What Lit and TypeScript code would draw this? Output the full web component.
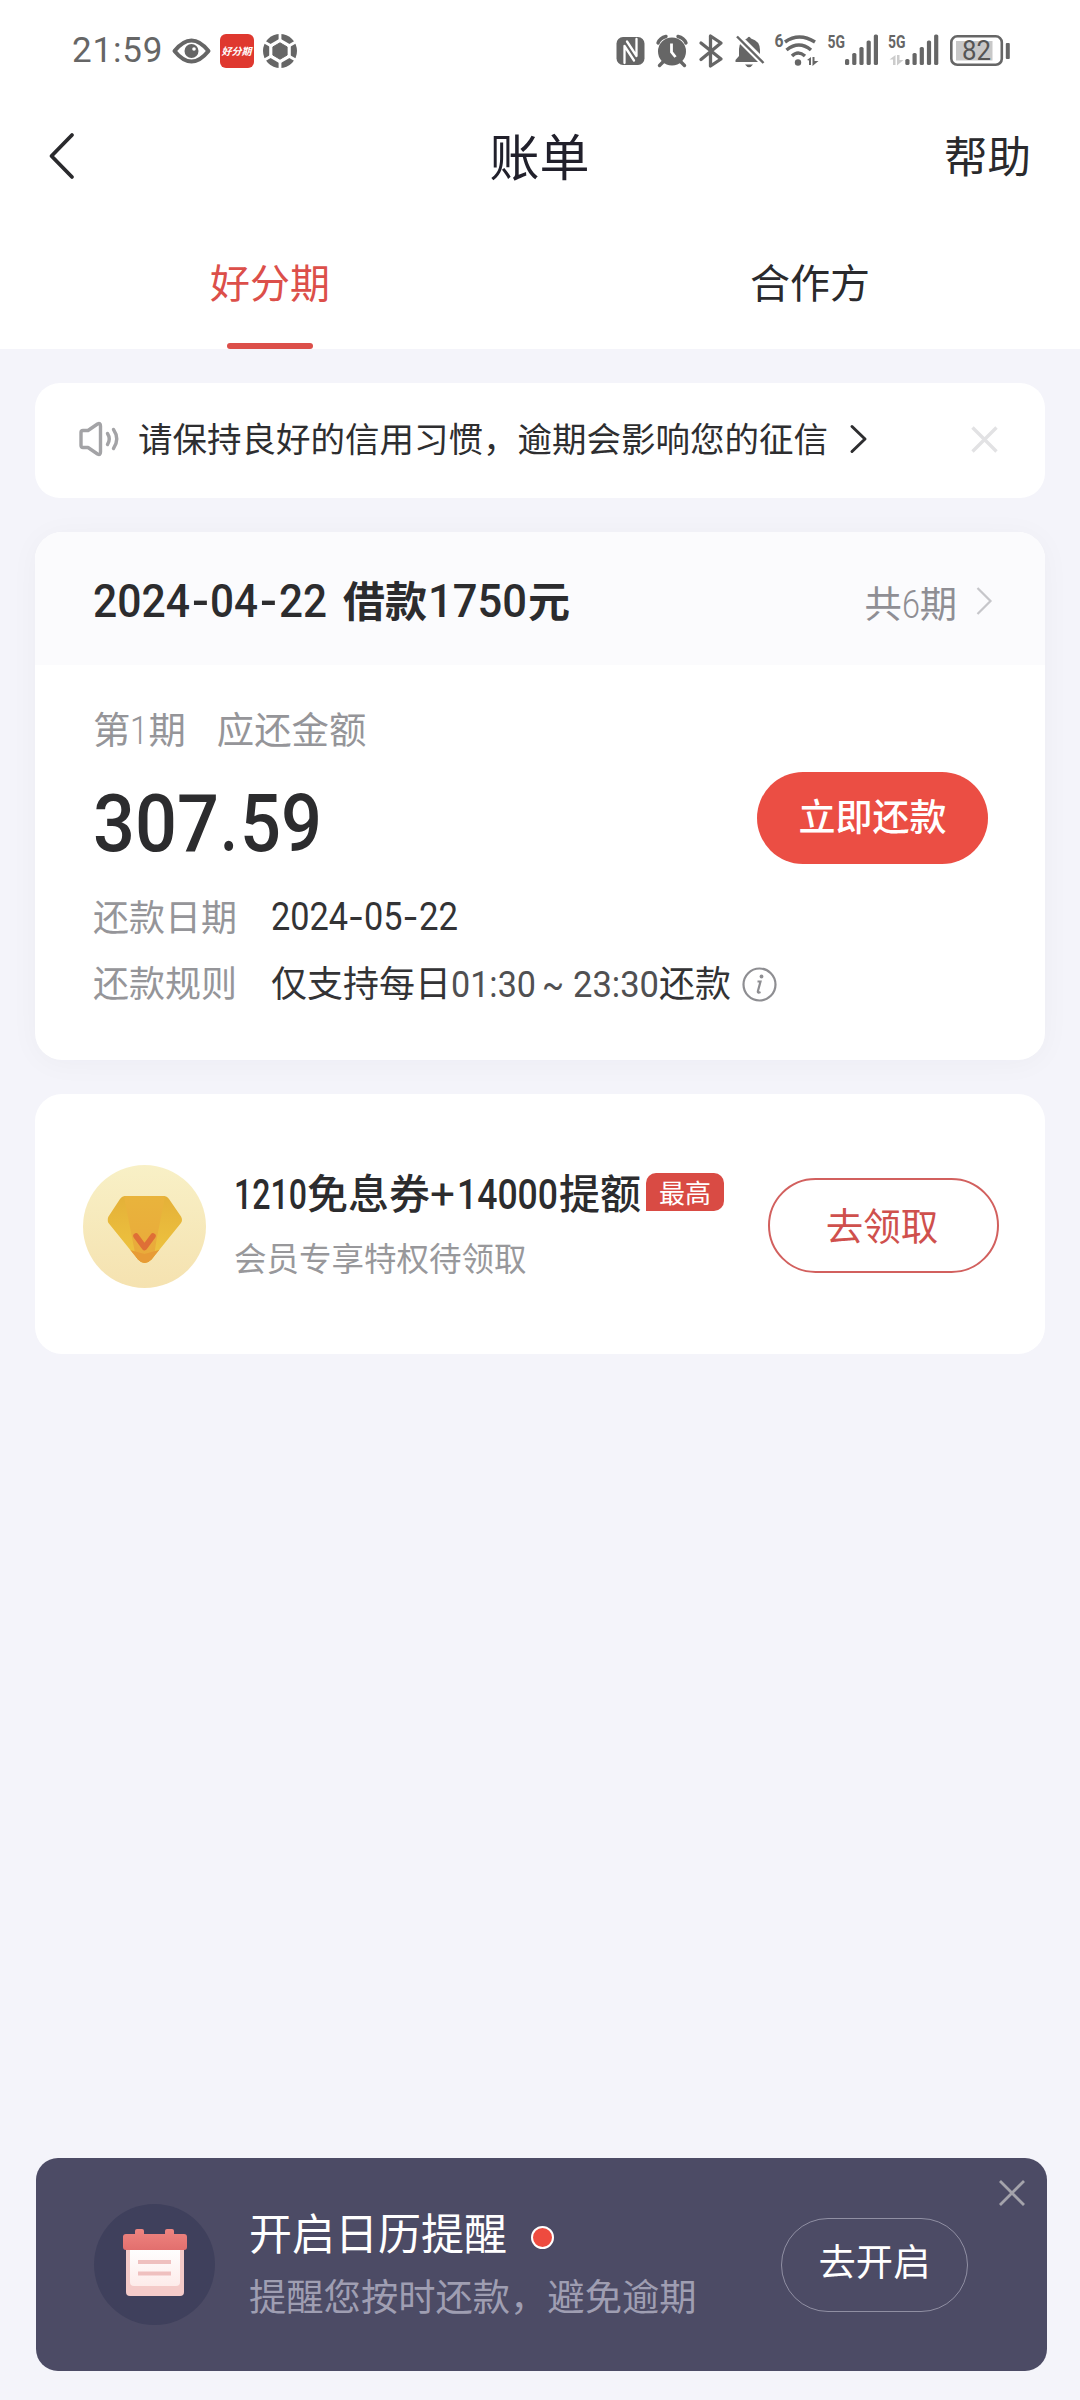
import { LitElement, html, svg, css } from "lit";
import { customElement } from "lit/decorators.js";

type Segment = [text: string, x: number, width: number];

/** Condensed numerals sitting on the text baseline; `cap` is the digit height. */
const num = (segments: Segment[], width: number, cap: number, weight = 400) => html`<svg
    class="num" width=${width} height=${cap} font-size=${cap / 0.711} font-weight=${weight}
  ><text>${segments.map(
    ([t, x, w]) => svg`<tspan x=${x} y=${cap} textLength=${w} lengthAdjust="spacingAndGlyphs">${t}</tspan>`
  )}</text></svg>`;

const shared = css`
  :host {
    display: block;
    font-family: "Noto Sans CJK SC", "Noto Sans", sans-serif;
  }
  * { box-sizing: border-box; }
  svg { display: block; flex: none; overflow: visible; }
  svg.num {
    display: inline-block;
    font-family: Roboto, "Noto Sans CJK SC", sans-serif;
    fill: currentColor;
  }
  .line { white-space: nowrap; }
`;

@customElement("status-bar")
class StatusBar extends LitElement {
  static styles = [shared, css`
    .bar {
      display: flex;
      align-items: center;
      height: 102px;
      padding: 0 70px 0 72px;
      color: #666;
      fill: #666;
      font-family: Roboto, sans-serif;
    }
    .time { font-size: 35px; line-height: 40px; width: 101px; margin-right: -9px; letter-spacing: 0.8px; white-space: nowrap; }
    .left, .right { display: flex; align-items: center; }
    .left { gap: 9px; }
    .right { margin-left: auto; gap: 11.100px; }
    .tiny { font: 700 19px Roboto, sans-serif; }
    .logo { font: italic 700 10px "Noto Sans CJK SC", sans-serif; fill: #fff; }
    .level { font: 400 27px Roboto, sans-serif; fill: #555; }
  `];

  private bars(x: number) {
    return svg`${[0, 1, 2, 3, 4].map((i) => svg`<rect x=${x + i * 7.2} y=${[59, 53, 47, 40.5, 34.5][i]}
      width="4.2" height=${[6, 12, 18, 24.5, 30.5][i]} rx="1.6" />`)}`;
  }

  render() {
    return html`<div class="bar">
      <div class="left">
        <span class="time">21:59</span>
        <svg width="38" height="34" viewBox="173 34 38 34">
          <path d="M174.500 51Q191.500 30 208.500 51Q191.500 72 174.500 51Z" fill="none" stroke="#666" stroke-width="4" stroke-linejoin="round" />
          <circle cx="191.500" cy="51" r="7" /><circle cx="194" cy="49" r="1.800" fill="#fff" />
        </svg>
        <svg width="34" height="34" viewBox="220 34 34 34">
          <rect x="220" y="34" width="34" height="34" rx="6" fill="#df382f" />
          <text class="logo" x="221.500" y="55" textLength="30" lengthAdjust="spacingAndGlyphs">好分期</text>
        </svg>
        <svg width="34" height="34" viewBox="-17 -17 34 34">
          <circle r="17" />
          <path fill="#fff" d="M0 -12.500L10.800 -6.250V6.250L0 12.500L-10.800 6.250V-6.250Z" />
          <path stroke="#fff" stroke-width="2.800" d="M0 -18V18M-15.600 -9L15.600 9M15.600 -9L-15.600 9" />
          <path stroke="#666" stroke-width="1" stroke-linejoin="round" d="M0 -8.200L7.100 -4.100V4.100L0 8.200L-7.100 4.100V-4.100Z" />
        </svg>
      </div>
      <div class="right">
        <svg width="29" height="34" viewBox="617 34 29 34">
          <rect x="617.500" y="37" width="28" height="28" rx="6.500" />
          <path d="M622.500 66H625.500V45L634.500 57M640.500 36H637.500V57L628.500 45" fill="none" stroke="#fff" stroke-width="0" />
          <path d="M625.300 62.500V43.500L635 56.500M637.700 39.500V58.500L628 45.500" fill="none" stroke="#fff" stroke-width="0" />
          <path d="M625.500 63V46L635 60.500" fill="none" stroke="#fff" stroke-width="2.300" stroke-linecap="round" stroke-linejoin="round" />
          <path d="M637.500 39V56L628 41.500" fill="none" stroke="#fff" stroke-width="2.300" stroke-linecap="round" stroke-linejoin="round" />
        </svg>
        <svg width="32" height="34" viewBox="657 34 32 34">
          <circle cx="673" cy="51.500" r="14" />
          <path d="M659 43Q661 38 667 36.500M687 43Q685 38 679 36.500M664 62L660.500 65.500M682 62L685.500 65.500" fill="none" stroke="#666" stroke-width="3.400" stroke-linecap="round" />
          <path d="M672.500 43.500V52L676.500 57" fill="none" stroke="#fff" stroke-width="2.800" />
        </svg>
        <svg width="24" height="34" viewBox="702 34 24 34">
          <path d="M703 43L723 59L712.500 66V36L723 43L703 59.500" fill="none" stroke="#666" stroke-width="3.300" stroke-linejoin="round" stroke-linecap="round" />
        </svg>
        <svg width="30" height="34" viewBox="736 34 30 34">
          <path d="M748 38.500Q750 35 752 38.500Q761 41 761 50V56L765 62H736.500V60L740 56V49Q740 41 748 38.500ZM746 64.500H754Q750 70 746 64.500Z" />
          <path d="M737 35L766 64" stroke="#fff" stroke-width="7" />
          <path d="M738 36.500L764.500 63" stroke="#666" stroke-width="2.400" />
        </svg>
        <svg width="42" height="34" viewBox="776 34 42 34">
          <text class="tiny" x="774.500" y="47" textLength="9" lengthAdjust="spacingAndGlyphs">6</text>
          <g fill="none" stroke="#666" stroke-width="3.500">
            <path d="M785 42Q799 32 815 42M786.500 50Q799 40 811 50M792 56Q798 50 805 56" />
          </g>
          <circle cx="798" cy="62.500" r="3.200" />
          <path d="M807 60L811 57V65H809V60.500ZM812.500 57H814.500V61H818.500L812.500 66Z" />
        </svg>
        <svg width="49" height="34" viewBox="828 34 49 34">
          <text class="tiny" x="826.500" y="48" textLength="17.500" lengthAdjust="spacingAndGlyphs">5G</text>
          ${this.bars(844)}
        </svg>
        <svg width="50" height="34" viewBox="888.500 34 50 34">
          <text class="tiny" x="887.500" y="48" textLength="17.500" lengthAdjust="spacingAndGlyphs">5G</text>
          <path fill="#ccc" d="M889 59.500L895 55V65H892.500V59.500ZM896.500 55H899V60H903L896.500 65.500Z" />
          ${this.bars(904.8)}
        </svg>
        <svg width="60" height="34" viewBox="950 34 60 34">
          <rect x="951.300" y="36.300" width="50.500" height="28.500" rx="6" fill="none" stroke="#666" stroke-width="2.600" />
          <rect x="956" y="41" width="36.500" height="19.500" fill="#c8c8c8" />
          <rect x="1005.800" y="43" width="4" height="16" rx="1" />
          <text class="level" x="962" y="60" textLength="29" lengthAdjust="spacingAndGlyphs">82</text>
        </svg>
      </div>
    </div>`;
  }
}

@customElement("page-header")
class PageHeader extends LitElement {
  static styles = [shared, css`
    .nav {
      display: grid;
      grid-template-columns: 1fr auto 1fr;
      align-items: center;
      height: 108px;
      padding: 0 49px 0 48px;
      color: #2a2a2d;
    }
    .title { font-size: 50px; line-height: 60px; padding-bottom: 5px; color: #21202b; }
    .help { justify-self: end; font-size: 43.5px; line-height: 50px; padding-bottom: 3px; }
    .tabs { display: flex; height: 139px; color: #2a2a2d; }
    .tab {
      flex: 1;
      display: flex;
      flex-direction: column;
      align-items: center;
      justify-content: space-between;
      padding-top: 46px;
      font-size: 40px;
      line-height: 50px;
    }
    .active { color: #dc4f4a; }
    .mark { width: 86px; height: 6px; border-radius: 3px; background: #dc4f4a; }
  `];
  render() {
    return html`
      <div class="nav">
        <svg width="27" height="48" viewBox="0 0 27 48"><path d="M24 3L3.500 24L24 45" fill="none" stroke="#2a2a2d" stroke-width="3.800" stroke-linecap="round" stroke-linejoin="round" /></svg>
        <span class="title">账单</span>
        <span class="help">帮助</span>
      </div>
      <div class="tabs">
        <div class="tab active"><span>好分期</span><i class="mark"></i></div>
        <div class="tab"><span>合作方</span></div>
      </div>`;
  }
}

@customElement("notice-bar")
class NoticeBar extends LitElement {
  static styles = [shared, css`
    .card {
      display: flex;
      align-items: center;
      height: 115px;
      padding: 0 47px 3px 44px;
      border-radius: 25px;
      background: #fff;
    }
    .text { margin-left: 17px; padding-bottom: 4px; font-size: 34.500px; line-height: 44px; color: #2e2e30; white-space: nowrap; }
    .go { margin-left: 22px; }
    .close { margin-left: auto; }
  `];
  render() {
    return html`<div class="card">
      <svg width="42" height="34" viewBox="0 0 42 34" fill="none" stroke="#a3a3a6" stroke-width="3.400" stroke-linejoin="round" stroke-linecap="round">
        <path d="M2 10.500Q2 8.500 4 8.500H9L18.500 2Q21.500 0.500 21.500 4V30Q21.500 33.500 18.500 32L9 25.500H4Q2 25.500 2 23.500Z" />
        <path d="M28.500 11.500Q32 17 28.500 22.500M34.500 7.500Q41 17 34.500 26.500" />
      </svg>
      <span class="text">请保持良好的信用习惯，逾期会影响您的征信</span>
      <svg class="go" width="18" height="28" viewBox="0 0 18 28"><path d="M2 1.500L15 14L2 26.500" fill="none" stroke="#2e2e30" stroke-width="3" stroke-linecap="round" stroke-linejoin="round" /></svg>
      <svg class="close" width="27" height="27" viewBox="0 0 27 27"><path d="M1.500 1.500L25.500 25.500M25.500 1.500L1.500 25.500" stroke="#e2e2e4" stroke-width="3.400" /></svg>
    </div>`;
  }
}

@customElement("bill-card")
class BillCard extends LitElement {
  static styles = [shared, css`
    .card {
      height: 528px;
      border-radius: 27px;
      background: #fff;
      box-shadow: 0 3px 30px rgba(40, 40, 70, 0.035);
      overflow: hidden;
    }
    .head {
      display: flex;
      align-items: center;
      justify-content: space-between;
      height: 133px;
      padding: 0 53px 0 58px;
      background: #fbfbfd;
    }
    .title { font-size: 42px; font-weight: 700; line-height: 52px; color: #2c2c2e; }
    .cash { margin-left: 16px; }
    .periods { display: flex; align-items: center; gap: 19px; font-size: 37.300px; line-height: 44px; color: #8f8e94; }
    .periods .line { padding-top: 6px; }
    .more { margin-top: 5px; }
    .body { padding: 38px 57px 0 58px; }
    .label { height: 50px; font-size: 37.400px; line-height: 50px; color: #959599; }
    .due { margin-left: 31px; }
    .pay { display: flex; align-items: center; justify-content: space-between; height: 92px; margin-top: 19px; color: #2c2c2e; }
    .amount { padding-top: 10px; line-height: 0; }
    .btn { width: 231px; height: 92px; border-radius: 46px; background: #eb4e44; color: #fff; font-size: 37px; font-weight: 500; line-height: 86px; text-align: center; }
    .row { display: flex; align-items: center; height: 44px; margin-top: 22px; font-size: 36px; line-height: 44px; color: #333335; }
    .row.first { margin-top: 29px; }
    .key { width: 178px; color: #959599; }
    .date { padding-top: 3px; line-height: 0; }
    .info { margin: 6px 0 0 11px; }
    .hours { color: #505052; }
  `];
  render() {
    return html`<section class="card">
      <div class="head">
        <div class="title line">${num([["2024", 0, 97], ["-", 99, 17], ["04", 117, 48], ["-", 167, 17], ["22", 186, 48]], 234, 33, 500)}<span class="cash">借款</span>${num([["1750", 1, 99]], 101, 33, 500)}元</div>
        <div class="periods"><span class="line">共${num([["6", 0, 18]], 18, 27, 300)}期</span>
          <svg class="more" width="16" height="28" viewBox="0 0 16 28"><path d="M1.500 1L14.500 14L1.500 27" fill="none" stroke="#c6c6ca" stroke-width="2.200" /></svg>
        </div>
      </div>
      <div class="body">
        <div class="label line">第${num([["1", 0, 18]], 18, 27, 300)}期<span class="due">应还金额</span></div>
        <div class="pay">
          <div class="amount">${num([["307", 0, 126], [".", 127, 18], ["59", 147, 82]], 227, 56, 500)}</div>
          <div class="btn">立即还款</div>
        </div>
        <div class="row first"><span class="key">还款日期</span><span class="date">${num([["2024", 0, 77], ["-", 78.5, 13], ["05", 93, 38.5], ["-", 133, 13], ["22", 148, 39]], 188, 27)}</span></div>
        <div class="row"><span class="key">还款规则</span><span class="line">仅支持每日<span class="hours">${num([["01:30", 0, 85], ["~", 91, 22], ["23:30", 122, 86]], 208, 26)}</span>还款</span>
          <svg class="info" width="35" height="35" viewBox="0 0 35 35">
            <circle cx="17.500" cy="17.500" r="16" fill="none" stroke="#8e8e92" stroke-width="2.200" />
            <path d="M15.500 14.500H18.500L15.800 24.500Q15.500 26.500 18.500 25" fill="none" stroke="#8e8e92" stroke-width="2.200" /><circle cx="19.500" cy="9.500" r="1.900" fill="#8e8e92" />
          </svg>
        </div>
      </div>
    </section>`;
  }
}

@customElement("member-card")
class MemberCard extends LitElement {
  static styles = [shared, css`
    .card { display: flex; align-items: center; height: 260px; padding: 0 46px 0 48px; border-radius: 27px; background: #fff; }
    .gem { margin-top: 5px; }
    .copy { height: 117px; margin-left: 28px; }
    .top { display: flex; align-items: center; height: 50px; }
    .title { font-size: 41px; font-weight: 500; line-height: 50px; color: #2c2c2e; }
    .tag { width: 78px; height: 38px; margin: 3px 0 0 5px; border-radius: 10px 10px 10px 0; background: #d94b44; color: #fff; font-size: 26px; line-height: 37px; text-align: center; }
    .sub { margin-top: 19px; font-size: 32.500px; line-height: 44px; color: #98989b; white-space: nowrap; }
    .btn { width: 231px; height: 95px; margin: 3px 0 0 auto; border: 2px solid #d2605e; border-radius: 48px; color: #cf504d; font-size: 37.500px; line-height: 87px; text-align: center; padding-right: 3px; }
  `];
  render() {
    return html`<section class="card">
      <svg class="gem" width="123" height="123" viewBox="82.500 1165 123 123">
        <defs>
          <linearGradient id="disc" x2="0" y2="1"><stop stop-color="#f8f0c6" /><stop offset="1" stop-color="#f5e2b0" /></linearGradient>
          <linearGradient id="body" x2="0" y2="1"><stop stop-color="#e9b43c" /><stop offset="1" stop-color="#e9a83a" /></linearGradient>
          <linearGradient id="side" x2="0" y2="1"><stop stop-color="#e4b038" /><stop offset="1" stop-color="#efc640" /></linearGradient>
          <clipPath id="shape"><path d="M125 1196H163Q166.500 1196 168.500 1199L180.500 1216.500Q182.500 1220 180.500 1223L151 1259.500Q144 1266.500 137.500 1259.500L108 1223Q106 1220 108 1216.500L119.500 1199Q121.500 1196 125 1196Z" /></clipPath>
        </defs>
        <circle cx="144" cy="1226.500" r="61.500" fill="url(#disc)" />
        <g clip-path="url(#shape)">
          <rect x="105" y="1194" width="80" height="72" fill="url(#side)" />
          <path d="M123 1194H165L156 1240L152 1266H137L132 1240Z" fill="url(#body)" />
          <path d="M126 1249L144 1254L162 1249L144 1270Z" fill="#e79b36" />
        </g>
        <path d="M135.500 1236L144 1247.500L152.500 1236" fill="none" stroke="#df6f36" stroke-width="5.500" stroke-linecap="round" stroke-linejoin="round" />
      </svg>
      <div class="copy">
        <div class="top">
          <div class="title line">${num([["1210", 0, 73]], 73, 30, 500)}免息券${num([["+", 0, 25]], 26, 30)}${num([["14000", 1, 101]], 103, 30, 500)}提额</div>
          <div class="tag">最高</div>
        </div>
        <div class="sub">会员专享特权待领取</div>
      </div>
      <div class="btn">去领取</div>
    </section>`;
  }
}

@customElement("reminder-banner")
class ReminderBanner extends LitElement {
  static styles = [shared, css`
    .card { position: relative; display: flex; align-items: center; height: 213px; padding: 0 79px 0 58px; border-radius: 22px; background: #4c4b65; }
    .copy { margin-left: 34px; padding-bottom: 3px; }
    .title { display: flex; align-items: center; gap: 24px; font-size: 43px; line-height: 60px; color: #fff; }
    .dot { width: 23px; height: 23px; margin-top: 12px; border: 2px solid #fff; border-radius: 50%; background: #ee4b3f; }
    .sub { margin-top: 4px; font-size: 37.300px; line-height: 60px; color: #9f9eb2; white-space: nowrap; }
    .btn { width: 187px; height: 94px; margin: 1px 0 0 auto; border: 1px solid #908fa3; border-radius: 47px; color: #fff; font-size: 37.300px; line-height: 83px; text-align: center; }
    .close { position: absolute; top: 22px; right: 22px; }
  `];
  render() {
    return html`<aside class="card">
      <svg width="121" height="121" viewBox="94 2204 121 121">
        <defs>
          <linearGradient id="red" x2="0" y2="1"><stop stop-color="#ee8580" /><stop offset="1" stop-color="#e26f6e" /></linearGradient>
          <linearGradient id="page" x2="0" y2="1"><stop stop-color="#fff" /><stop offset="1" stop-color="#fdecea" /></linearGradient>
        </defs>
        <circle cx="154.500" cy="2264.500" r="60.500" fill="#3f405c" />
        <rect x="126" y="2244" width="58" height="52" rx="4" fill="#f4cbc9" />
        <path d="M130 2248H180V2282Q180 2286 176 2286H134Q130 2286 130 2282Z" fill="url(#page)" />
        <path d="M138 2262H171M138 2273.500H171" stroke="#efc0bf" stroke-width="4" />
        <path d="M126 2234H135V2231Q135 2229 137 2229H142Q144 2229 144 2231V2234H165V2231Q165 2229 167 2229H172Q174 2229 174 2231V2234H184Q187 2234 187 2237V2247Q187 2250 184 2250H126Q123 2250 123 2247V2237Q123 2234 126 2234Z" fill="url(#red)" />
      </svg>
      <div class="copy">
        <div class="title"><span>开启日历提醒</span><i class="dot"></i></div>
        <div class="sub">提醒您按时还款，避免逾期</div>
      </div>
      <div class="btn">去开启</div>
      <svg class="close" width="26" height="26" viewBox="0 0 26 26"><path d="M1 1L25 25M25 1L1 25" stroke="#a4a3ab" stroke-width="2.800" /></svg>
    </aside>`;
  }
}

@customElement("app-root")
class AppRoot extends LitElement {
  static styles = [shared, css`
    .page { display: flex; flex-direction: column; width: 1080px; height: 2400px; background: #f4f4fa; overflow: hidden; }
    .top { background: #fff; height: 349px; }
    main { display: flex; flex-direction: column; padding: 34px 35px 0; }
    bill-card { margin-top: 34px; }
    member-card { margin-top: 34px; }
    footer { margin-top: auto; padding: 0 33px 29px 36px; }
  `];
  render() {
    return html`<div class="page">
      <div class="top"><status-bar></status-bar><page-header></page-header></div>
      <main><notice-bar></notice-bar><bill-card></bill-card><member-card></member-card></main>
      <footer><reminder-banner></reminder-banner></footer>
    </div>`;
  }
}
